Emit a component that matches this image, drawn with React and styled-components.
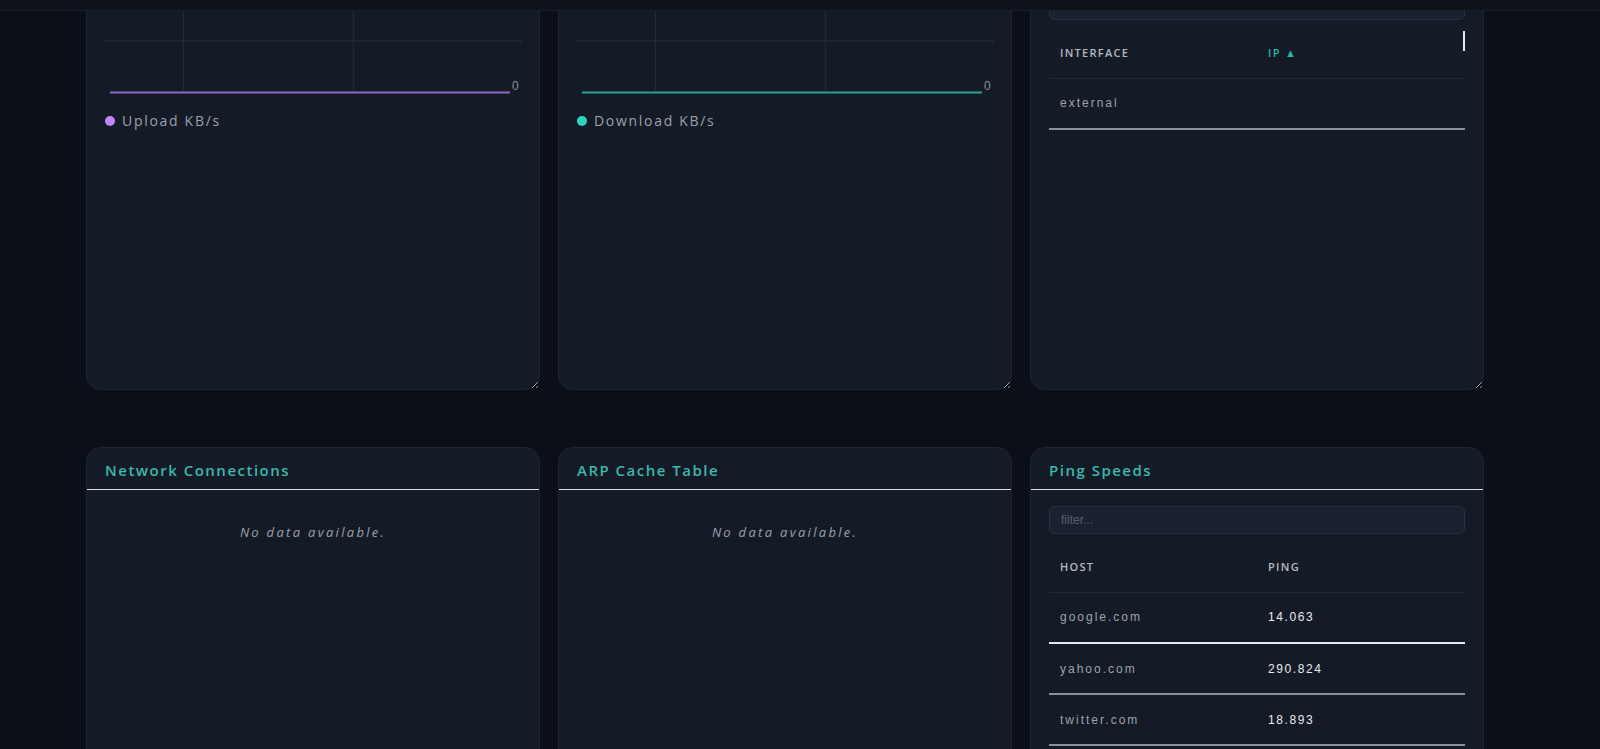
import React from "react";
import styled, { createGlobalStyle } from "styled-components";

const GlobalStyle = createGlobalStyle`
  html, body {
    margin: 0;
    padding: 0;
    background: #0b0f17;
    overflow: hidden;
  }
  * { box-sizing: border-box; }
`;

const Shell = styled.div`
  height: 100vh;
  display: flex;
  flex-direction: column;
  background: #0b0f17;
  font-family: "Open Sans", "Noto Sans", sans-serif;
`;

const TopBar = styled.header`
  flex: 0 0 11px;
  height: 11px;
  background: #0e121b;
  border-bottom: 1px solid #1a1f29;
  position: relative;
  z-index: 2;
`;

const Scroller = styled.main`
  flex: 1;
  overflow: hidden;
`;

const Dashboard = styled.div`
  margin-top: -78px;
  margin-left: 86px;
  width: 1398px;
  display: grid;
  grid-template-columns: repeat(3, 1fr);
  column-gap: 18px;
  row-gap: 57px;
`;

const Card = styled.section`
  height: 457px;
  background: #141b26;
  border: 1px solid #1f2632;
  border-radius: 15px;
  overflow: hidden;
  resize: both;
  display: flex;
  flex-direction: column;
`;

const CardHeader = styled.div`
  padding: 12px 18px 9px;
  border-bottom: 1px solid #dde1e8;
`;

const Title = styled.h2`
  margin: 0;
  font-size: 15px;
  line-height: 20px;
  font-weight: 600;
  letter-spacing: 1.5px;
  color: #3ab8aa;
`;

const CardBody = styled.div`
  padding: 16px 18px;
  display: flex;
  flex-direction: column;
`;

const ChartSvg = styled.svg`
  display: block;
  width: 100%;
  height: 106px;
  overflow: visible;
`;

const Legend = styled.div`
  margin-top: 13px;
  display: flex;
  align-items: center;
  gap: 7px;
  font-size: 14px;
  line-height: 20px;
  letter-spacing: 1.7px;
  color: #9aa2ae;
`;

const Dot = styled.span`
  width: 10px;
  height: 10px;
  border-radius: 50%;
  background: ${(p) => p.$color};
`;

const Empty = styled.p`
  margin: 16px 0 0;
  text-align: center;
  font-style: italic;
  font-size: 13px;
  line-height: 20px;
  letter-spacing: 2.3px;
  color: #9ba2ad;
`;

const FilterInput = styled.input`
  width: 100%;
  height: 28px;
  background: #1b2130;
  border: 1px solid #29303f;
  border-radius: 6px;
  padding: 0 11px;
  font-family: "Liberation Sans", Arial, sans-serif;
  font-size: 12px;
  color: #c9ced6;
  outline: none;
  &::placeholder {
    color: #566070;
  }
`;

const TableWrap = styled.div`
  position: relative;
  margin-top: 8px;
`;

const ScrollThumb = styled.span`
  position: absolute;
  right: 0;
  top: 3px;
  width: 2px;
  height: 20px;
  background: #e6e9ef;
`;

const Table = styled.table`
  width: 100%;
  border-collapse: collapse;
  table-layout: fixed;
`;

const Th = styled.th`
  height: 50px;
  padding: 0 11px;
  text-align: left;
  font-family: "Open Sans", sans-serif;
  font-size: 11px;
  font-weight: 600;
  letter-spacing: 1.3px;
  text-transform: uppercase;
  color: ${(p) => (p.$active ? "#2bb3a3" : "#b3b9c3")};
  border-bottom: 1px solid #222935;
`;

const Tr = styled.tr`
  border-bottom: 2px solid ${(p) => (p.$highlight ? "#e6e9ee" : "#8b919b")};
`;

const Td = styled.td`
  height: 51px;
  padding: 0 11px;
  font-family: "Liberation Sans", Arial, sans-serif;
  font-size: 12px;
  letter-spacing: ${(p) => (p.$value ? "1.6px" : "2px")};
  color: ${(p) => (p.$value ? "#e9ebef" : "#9ca3ad")};
`;

function Chart({ color, label, dot }) {
  return (
    <>
      <ChartSvg>
        <line x1="0" y1="0.5" x2="417" y2="0.5" stroke="#232a36" strokeWidth="1" />
        <line x1="0" y1="49" x2="417" y2="49" stroke="#232a36" strokeWidth="1.5" />
        <line x1="78.5" y1="-20" x2="78.5" y2="100" stroke="#232a36" strokeWidth="1" />
        <line x1="248.5" y1="-20" x2="248.5" y2="100" stroke="#232a36" strokeWidth="1" />
        <line x1="5" y1="100.5" x2="405" y2="100.5" stroke={color} strokeWidth="2" />
        <text
          x="407"
          y="98"
          fontSize="12"
          fill="#8b929e"
          fontFamily="'Liberation Sans', Arial, sans-serif"
        >
          0
        </text>
      </ChartSvg>
      <Legend>
        <Dot $color={dot} />
        {label}
      </Legend>
    </>
  );
}

function DataTable({ columns, rows, thumb }) {
  return (
    <TableWrap>
      {thumb && <ScrollThumb />}
      <Table>
        <thead>
          <tr>
            {columns.map((c) => (
              <Th key={c.label} $active={c.active}>
                {c.label}
              </Th>
            ))}
          </tr>
        </thead>
        <tbody>
          {rows.map((r, i) => (
            <Tr key={i} $highlight={r.highlight}>
              <Td>{r.cells[0]}</Td>
              <Td $value>{r.cells[1]}</Td>
            </Tr>
          ))}
        </tbody>
      </Table>
    </TableWrap>
  );
}

export default function App() {
  return (
    <Shell>
      <GlobalStyle />
      <TopBar />
      <Scroller>
        <Dashboard>
          <Card>
            <CardHeader>
              <Title>Upload Speed</Title>
            </CardHeader>
            <CardBody>
              <Chart color="#9366c8" dot="#c084fc" label="Upload KB/s" />
            </CardBody>
          </Card>
          <Card>
            <CardHeader>
              <Title>Download Speed</Title>
            </CardHeader>
            <CardBody>
              <Chart color="#2aa193" dot="#2dd4bf" label="Download KB/s" />
            </CardBody>
          </Card>
          <Card>
            <CardHeader>
              <Title>Network Interfaces</Title>
            </CardHeader>
            <CardBody>
              <FilterInput placeholder="filter..." />
              <DataTable
                thumb
                columns={[{ label: "Interface" }, { label: "IP ▲", active: true }]}
                rows={[{ cells: ["external", ""] }]}
              />
            </CardBody>
          </Card>

          <Card>
            <CardHeader>
              <Title>Network Connections</Title>
            </CardHeader>
            <CardBody>
              <Empty>No data available.</Empty>
            </CardBody>
          </Card>
          <Card>
            <CardHeader>
              <Title>ARP Cache Table</Title>
            </CardHeader>
            <CardBody>
              <Empty>No data available.</Empty>
            </CardBody>
          </Card>
          <Card>
            <CardHeader>
              <Title>Ping Speeds</Title>
            </CardHeader>
            <CardBody>
              <FilterInput placeholder="filter..." />
              <DataTable
                columns={[{ label: "Host" }, { label: "Ping" }]}
                rows={[
                  { cells: ["google.com", "14.063"], highlight: true },
                  { cells: ["yahoo.com", "290.824"] },
                  { cells: ["twitter.com", "18.893"] },
                ]}
              />
            </CardBody>
          </Card>
        </Dashboard>
      </Scroller>
    </Shell>
  );
}
